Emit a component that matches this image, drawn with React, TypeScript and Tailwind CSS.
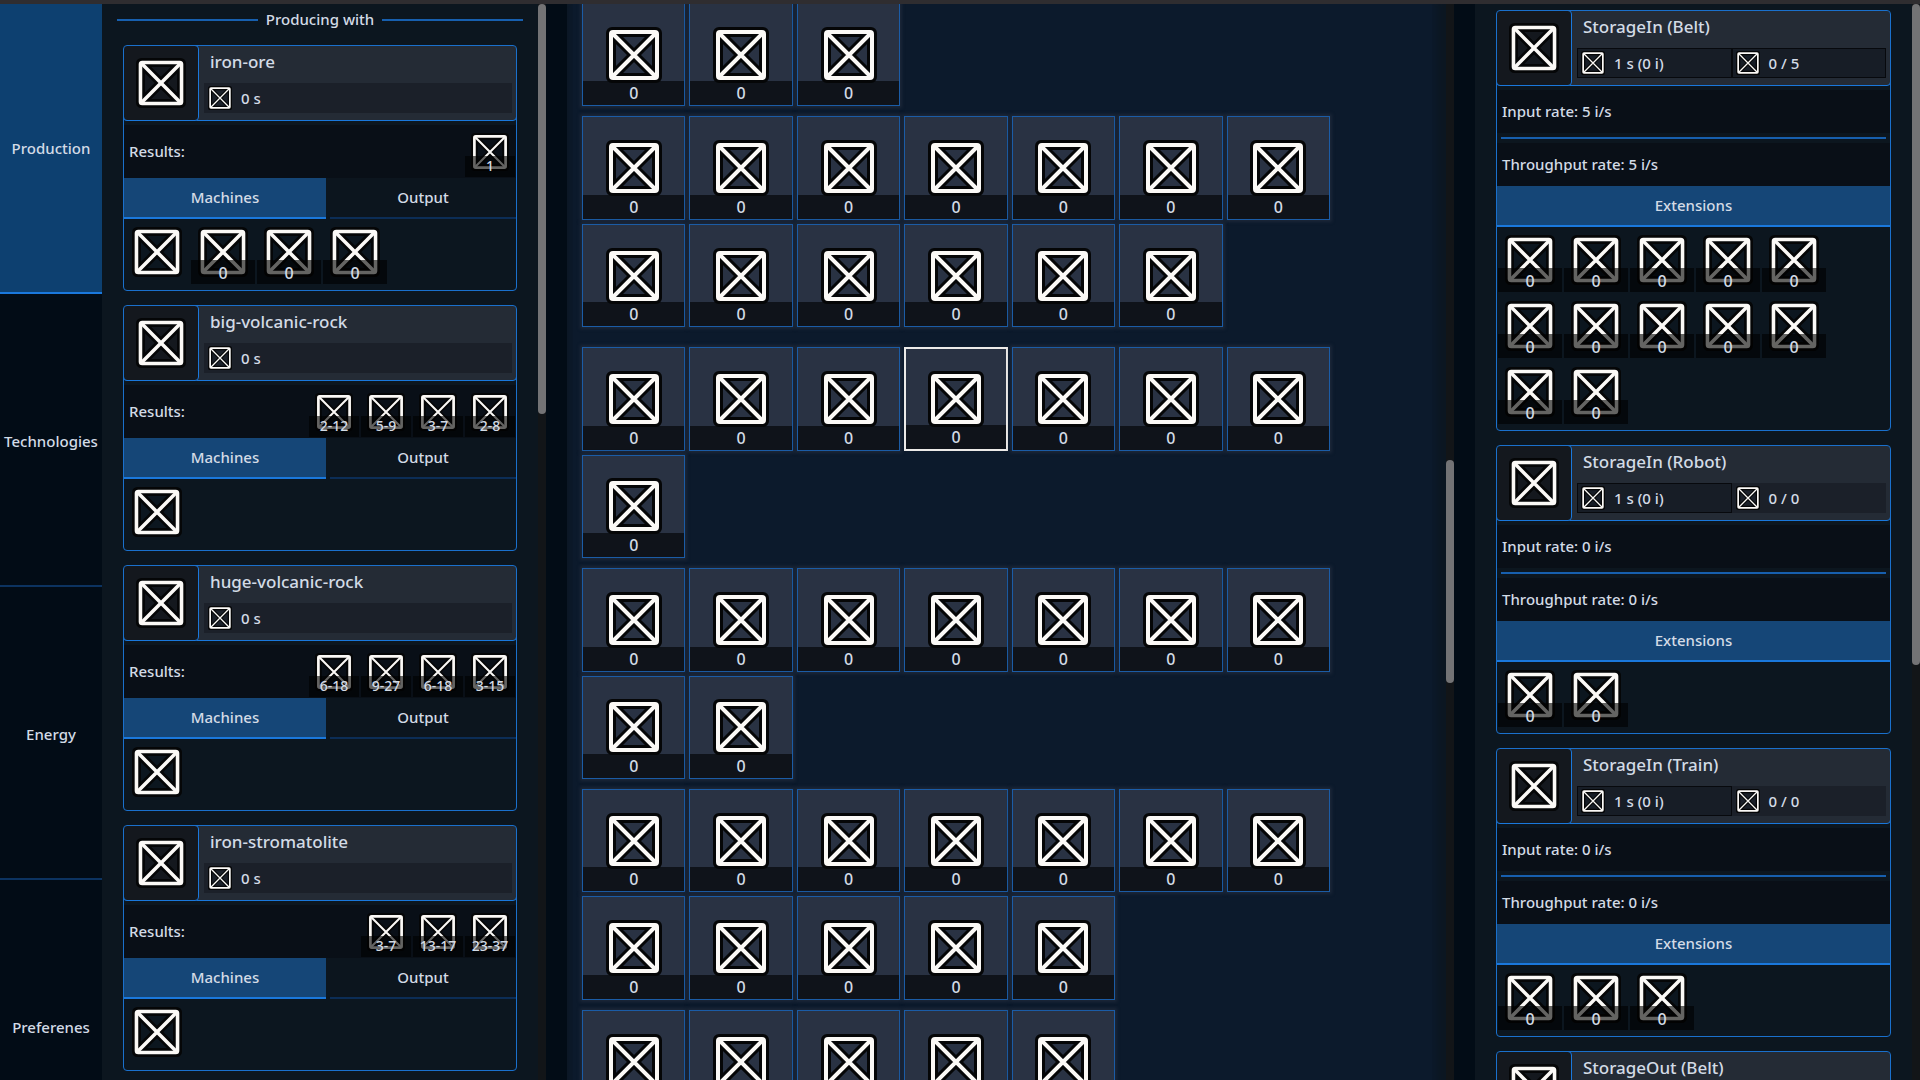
import type { ReactNode } from "react";

const tabs = ["Production", "Technologies", "Energy", "Preferenes"];

const recipes = [
  { name: "iron-ore", results: ["1"], machines: [null, "0", "0", "0"] },
  { name: "big-volcanic-rock", results: ["2-12", "5-9", "3-7", "2-8"], machines: [null] },
  { name: "huge-volcanic-rock", results: ["6-18", "9-27", "6-18", "3-15"], machines: [null] },
  { name: "iron-stromatolite", results: ["3-7", "13-17", "23-37"], machines: [null] },
];

const groups = [3, 13, 0, 8, 9, 12, 5];
const selected = { group: 3, index: 3 };

const storages = [
  { name: "StorageIn (Belt)", used: "0 / 5", rate: "5 i/s", extensions: 12, expandable: true },
  { name: "StorageIn (Robot)", used: "0 / 0", rate: "0 i/s", extensions: 2, expandable: false },
  { name: "StorageIn (Train)", used: "0 / 0", rate: "0 i/s", extensions: 3, expandable: false },
  { name: "StorageOut (Belt)", used: "0 / 5", rate: "5 i/s", extensions: 12, expandable: true },
];

function BoxIcon({ className, thin }: { className: string; thin?: boolean }) {
  return (
    <svg viewBox="0 0 56 56" className={className} fill="none" strokeLinejoin="round" aria-hidden="true">
      <g stroke="#050607">
        <rect x="5" y="5" width="46" height="46" rx="1" strokeWidth="10" />
        <path d="M6 6 50 50M50 6 6 50" strokeWidth={thin ? 8 : 10} />
      </g>
      <g stroke="#fbf9f6">
        <rect x="5" y="5" width="46" height="46" rx="2" strokeWidth="4" />
        <path d="M6 6 50 50M50 6 6 50" strokeWidth={thin ? 3 : 4} />
      </g>
    </svg>
  );
}

function SmallSlot({ label }: { label: string | null }) {
  return (
    <button type="button" className="relative flex size-16 items-center justify-center">
      <BoxIcon className="size-[50px]" />
      {label !== null && (
        <span className="absolute inset-x-0 bottom-0 bg-black/60 pt-0.5 text-center text-base leading-[22px]">
          {label}
        </span>
      )}
    </button>
  );
}

function ResultSlot({ label }: { label: string }) {
  return (
    <div className="relative flex size-[50px] items-center justify-center">
      <BoxIcon thin className="size-[38px]" />
      <span className="absolute inset-x-0 bottom-0 bg-black/60 pb-px text-center text-sm leading-5">{label}</span>
    </div>
  );
}

function Stat({ text, boxed }: { text: string; boxed?: boolean }) {
  return (
    <div
      className={
        boxed
          ? "flex flex-1 items-center gap-[9px] border border-[#07090d] bg-[#171d26] pl-[3px]"
          : "flex flex-1 items-center gap-[9px] border border-transparent bg-[#1b2029] pl-[3px]"
      }
    >
      <BoxIcon thin className="size-6" />
      <span className="text-[15px] leading-5">{text}</span>
    </div>
  );
}

function Card({ title, stats, children }: { title: string; stats: ReactNode; children: ReactNode }) {
  return (
    <article className="shrink-0 overflow-hidden rounded-[4px] border border-[#1a70cc] pb-1.5">
      <header className="-mx-px -mt-px flex h-[76px] rounded-[4px] border border-[#1a78dc] bg-[#242b35]">
        <div className="-my-px -ml-px flex w-[76px] items-center justify-center rounded-[4px] border border-[#1a78dc] bg-[#14181e]">
          <BoxIcon className="size-[50px]" />
        </div>
        <div className="flex flex-1 flex-col justify-between pt-1 pr-1 pb-[7px] pl-[5px]">
          <h3 className="pl-1.5 text-[17px] leading-6">{title}</h3>
          <div className="flex h-[30px]">{stats}</div>
        </div>
      </header>
      {children}
    </article>
  );
}

function TabButton({ active, className, children }: { active?: boolean; className: string; children: ReactNode }) {
  return (
    <button
      type="button"
      className={`${className} h-[41px] border-b-2 text-[15px] ${
        active ? "border-[#1a78dc] bg-[#154677]" : "border-[#0c2d56] bg-[#0c151e]"
      }`}
    >
      {children}
    </button>
  );
}

function ScrollColumn({ thumb, children }: { thumb: ReactNode; children: ReactNode }) {
  return (
    <>
      {children}
      <div className="flex w-2 shrink-0 flex-col bg-[#121518]">{thumb}</div>
    </>
  );
}

function Rule() {
  return <div className="h-0.5 flex-1 bg-[#175fae]" />;
}

export default function App() {
  return (
    <div className="flex h-screen flex-col overflow-hidden bg-[#020c16] font-['Noto_Sans',sans-serif] font-medium text-[#d3dbe6]">
      <div className="h-1 shrink-0 bg-[#2f2d30]" />
      <main className="flex min-h-0 flex-1">
        <nav className="flex w-[102px] shrink-0 flex-col gap-[3px] overflow-hidden">
          {tabs.map((t, i) => (
            <button
              key={t}
              type="button"
              className={`h-[290px] shrink-0 border-b-2 text-[15px] ${
                i === 0 ? "border-[#1a78dc] bg-[#0d4070]" : "border-[#0c3360]"
              }`}
            >
              {t}
            </button>
          ))}
        </nav>

        <section className="flex w-[444px] shrink-0 bg-[#0c161f]">
          <ScrollColumn thumb={<div className="h-[410px] rounded-full bg-[#737375]" />}>
            <div className="flex min-w-0 flex-1 flex-col overflow-hidden px-[15px]">
              <div className="flex h-[41px] shrink-0 items-center gap-2 pb-2.5">
                <Rule />
                <h2 className="text-[15px]">Producing with</h2>
                <Rule />
              </div>
              <div className="flex flex-col gap-3.5 px-1.5">
                {recipes.map((r) => (
                  <Card key={r.name} title={r.name} stats={<Stat text="0 s" />}>
                    <div className="mt-1 flex h-[53px] items-center justify-between bg-[#090f17] pr-px pl-[5px]">
                      <span className="text-[15px]">Results:</span>
                      <div className="flex gap-0.5">
                        {r.results.map((v, i) => (
                          <ResultSlot key={i} label={v} />
                        ))}
                      </div>
                    </div>
                    <div className="flex gap-1">
                      <TabButton active className="w-[202px]">
                        Machines
                      </TabButton>
                      <TabButton className="flex-1">Output</TabButton>
                    </div>
                    <div className="flex flex-wrap gap-0.5 px-px pt-px">
                      {r.machines.map((m, i) => (
                        <SmallSlot key={i} label={m} />
                      ))}
                    </div>
                  </Card>
                ))}
              </div>
            </div>
          </ScrollColumn>
        </section>

        <section className="ml-[21px] flex min-w-0 flex-1 bg-[#0c1722]">
          <ScrollColumn thumb={<div className="mt-[456px] h-[223px] rounded-full bg-[#737375]" />}>
            <div className="min-w-0 flex-1 overflow-hidden pr-3.5 pl-1.5">
              <div className="-mt-px flex min-h-full flex-col gap-2.5 bg-[#0c1a2c] pl-[9px] shadow-[0_0_8px_4px_#0c1a2c]">
                {groups.map((count, g) => (
                  <div key={g} className="grid w-[748px] grid-cols-7 gap-1">
                    {Array.from({ length: count }, (_, i) => (
                      <button
                        key={i}
                        type="button"
                        className={`relative flex aspect-square items-center justify-center bg-[#293243] ${
                          g === selected.group && i === selected.index
                            ? "border-2 border-[#eceae8]"
                            : "border border-[#1b5ca6] shadow-[0_0_3px_2px_#1c2738]"
                        }`}
                      >
                        <span className="absolute inset-x-0 bottom-0 bg-[#0f131a] text-center text-base leading-6">
                          0
                        </span>
                        <BoxIcon className="relative size-14" />
                      </button>
                    ))}
                  </div>
                ))}
              </div>
            </div>
          </ScrollColumn>
        </section>

        <section className="ml-[21px] flex w-[445px] shrink-0 bg-[#0c161f]">
          <ScrollColumn thumb={<div className="h-[661px] rounded-full bg-[#737375]" />}>
            <div className="flex min-w-0 flex-1 flex-col gap-3.5 overflow-hidden px-[21px] pt-1.5">
              {storages.map((s) => (
                <Card
                  key={s.name}
                  title={s.name}
                  stats={
                    <>
                      <Stat text="1 s (0 i)" boxed />
                      <Stat text={s.used} boxed={s.expandable} />
                    </>
                  }
                >
                  <p className="mt-1 h-[43px] bg-[#090f17] pl-[5px] text-[15px] leading-[43px]">Input rate: {s.rate}</p>
                  <div className="flex px-1 py-1">
                    <Rule />
                  </div>
                  <p className="h-[43px] bg-[#090f17] pl-[5px] text-[15px] leading-[43px]">Throughput rate: {s.rate}</p>
                  <TabButton active className="w-full">
                    Extensions
                  </TabButton>
                  <div className="flex flex-wrap gap-0.5 pt-px pr-12 pl-px">
                    {Array.from({ length: s.extensions }, (_, i) => (
                      <SmallSlot key={i} label="0" />
                    ))}
                  </div>
                </Card>
              ))}
            </div>
          </ScrollColumn>
        </section>
      </main>
    </div>
  );
}
